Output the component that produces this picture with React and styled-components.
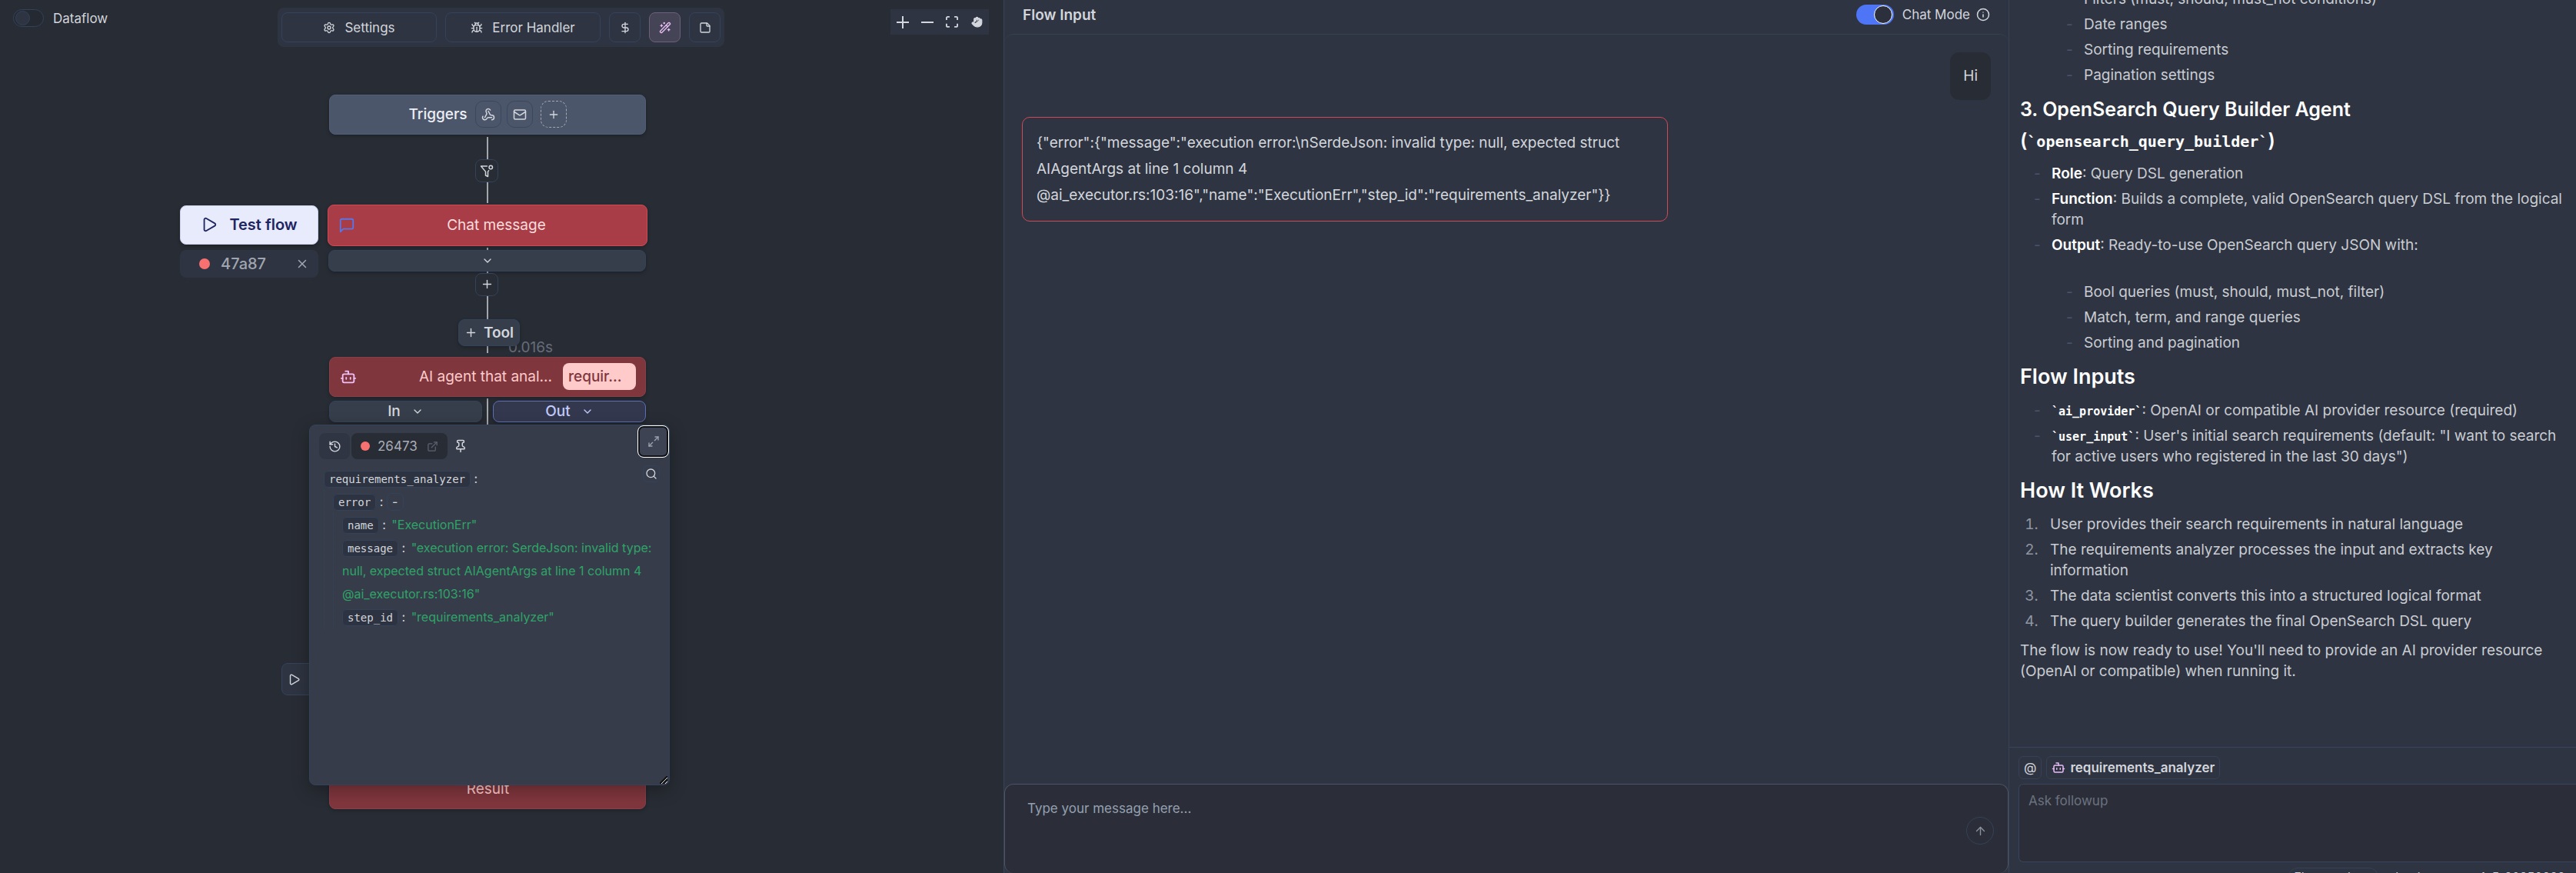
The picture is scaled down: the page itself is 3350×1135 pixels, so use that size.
import React from "react";
import styled, { createGlobalStyle } from "styled-components";
import {
  ArrowUp,
  Bot,
  Bug,
  ChevronDown,
  DollarSign,
  ExternalLink,
  Hand,
  History,
  Info,
  Mail,
  Maximize2,
  Pin,
  Play,
  Plus,
  Search,
  Settings,
  StickyNote,
  WandSparkles,
  Webhook,
  X,
} from "lucide-react";

const GlobalStyle = createGlobalStyle`
  * {
    box-sizing: border-box;
  }

  body {
    margin: 0;
    background: #2e3441;
    color: #d3d6dc;
    font-family: Inter, "Liberation Sans", sans-serif;
    font-size: 17px;
    overflow: hidden;
  }

  button,
  textarea {
    margin: 0;
    padding: 0;
    border: 0;
    background: none;
    color: inherit;
    font: inherit;
  }
`;

const Page = styled.div`
  display: grid;
  grid-template-columns: 1305fr 1308fr 737fr;
  grid-template-rows: minmax(0, 1fr);
  height: 100vh;
`;

/* ---------- flow canvas ---------- */

const Canvas = styled.section`
  position: relative;
  overflow: hidden;
  background: #282c34;
`;

const CanvasBar = styled.header`
  display: grid;
  grid-template-columns: 1fr auto 1fr;
  align-items: start;
  padding: 10px 19px 0 17px;
`;

const SwitchLabel = styled.label`
  display: flex;
  align-items: center;
  gap: 12px;
  height: 27px;
`;

const SmallSwitch = styled.input`
  appearance: none;
  display: flex;
  align-items: center;
  width: 40px;
  height: 23px;
  margin: 0;
  padding: 2px;
  border: 1px solid #33435a;
  border-radius: 12px;
  background: #252932;

  &::before {
    content: "";
    width: 17px;
    height: 17px;
    border: 1px solid #33435a;
    border-radius: 50%;
    background: #2e3441;
  }
`;

const Toolbar = styled.div`
  display: flex;
  gap: 11px;
  padding: 6px 5px;
  border-radius: 8px;
  background: #2e3441;
`;

const ToolButton = styled.button`
  display: flex;
  align-items: center;
  justify-content: center;
  gap: 12px;
  width: ${(props) => (props.$wide ? "202px" : "41px")};
  height: 39px;
  border: 1px solid ${(props) => (props.$active ? "#6d6079" : "#33435a")};
  border-radius: 8px;
  background: ${(props) => (props.$active ? "#444456" : "transparent")};
  color: ${(props) => (props.$active ? "#e9bdf6" : "#d3d6dc")};
`;

const Controls = styled.div`
  display: flex;
  justify-self: end;
  margin-top: 2px;
  background: #2e3441;
`;

const ControlButton = styled.button`
  display: flex;
  align-items: center;
  justify-content: center;
  width: 32px;
  height: 33px;
`;

const Node = styled.div`
  position: absolute;
  left: ${(props) => props.$x}px;
  top: ${(props) => props.$y}px;
  width: ${(props) => props.$w}px;
  height: ${(props) => props.$h}px;
`;

const Edge = styled(Node)`
  background: #a3a6ab;
`;

const Card = styled(Node)`
  display: flex;
  align-items: center;
  justify-content: center;
  padding-bottom: 1px;
  border-radius: 8px;
  box-shadow: 0 2px 5px rgba(0, 0, 0, 0.25);
  font-size: 19px;
`;

const TriggersCard = styled(Card)`
  gap: 7px;
  border: 1px solid #4f5f78;
  background: #4c566a;
  color: #eceff4;
  font-weight: 500;
`;

const TriggerButton = styled.button`
  display: flex;
  align-items: center;
  justify-content: center;
  width: 34px;
  height: 35px;
  margin-left: ${(props) => (props.$spaced ? "3px" : "0")};
  border: 1px ${(props) => (props.$dashed ? "dashed #a3a8b3" : "solid #3b475c")};
  border-radius: 10px;
  color: #d3d6dc;
`;

const StepCard = styled(Card)`
  justify-content: flex-start;
  padding: 0 12px 1px 13px;
  border: 1px solid ${(props) => (props.$selected ? "#d04a55" : "#86404a")};
  background: ${(props) => (props.$selected ? "#a83d47" : "#80363d")};
  color: ${(props) => (props.$selected ? "#fbdcdd" : "#fecaca")};
`;

const StepTitle = styled.span`
  flex: 1;
  padding-right: ${(props) => (props.$tagged ? "14px" : "0")};
  text-align: ${(props) => (props.$tagged ? "right" : "center")};
`;

const StepTag = styled.span`
  width: 95px;
  padding: 0 7px;
  border-radius: 8px;
  background: #fecaca;
  color: #80363d;
  font-weight: 500;
  line-height: 35px;
`;

const SlotButton = styled(Card)`
  gap: 14px;
  border: 1px solid ${(props) => (props.$open ? "#5b70b8" : "#33435a")};
  background: ${(props) => (props.$open ? "#34384f" : "#363e4b")};
  color: ${(props) => (props.$open ? "#c1cbfb" : "#d3d6dc")};
  font-weight: 500;
`;

const EdgeButton = styled(Card)`
  border: 1px solid #33435a;
  background: #282c34;
  box-shadow: none;
`;

const AddTool = styled(Card)`
  gap: 8px;
  border: 1px solid #33435a;
  background: #363e4b;
  font-weight: 600;
`;

const StepTime = styled(Node)`
  color: #666c79;
  font-size: 19px;
  line-height: 20px;
`;

const TestFlow = styled(Card)`
  gap: 15px;
  border: 1px solid #c9d1ea;
  background: #e7ebfc;
  color: #1e2561;
  font-size: 20px;
  font-weight: 600;
`;

const JobChip = styled(Card)`
  justify-content: flex-start;
  gap: 14px;
  padding: 0 12px 0 25px;
  background: #2e3441;
  box-shadow: none;
  color: #a0a5b0;
  font-size: 20px;
  font-weight: 500;

  button {
    display: flex;
    margin-left: auto;
  }
`;

const StatusDot = styled.span`
  width: ${(props) => props.$size}px;
  height: ${(props) => props.$size}px;
  border-radius: 50%;
  background: #f87171;
`;

const PlayTab = styled(Node)`
  display: flex;
  align-items: center;
  padding-left: 7px;
  border: 1px solid #33435a;
  border-radius: 8px 0 0 8px;
  background: #2e3441;
`;

const Popup = styled(Node)`
  border: 1px solid #33435a;
  border-radius: 8px;
  background: #363c4a;
  box-shadow: 0 6px 22px rgba(0, 0, 0, 0.3);
`;

const PopupBar = styled.div`
  display: flex;
  align-items: center;
  gap: 2px;
  height: 54px;
  padding-left: 12px;
`;

const HistoryButton = styled.button`
  display: flex;
  align-items: center;
  justify-content: center;
  width: 40px;
  height: 34px;
  border-radius: 8px;
  background: #2f3543;
`;

const RunLink = styled.a`
  display: flex;
  align-items: center;
  gap: 10px;
  height: 34px;
  padding: 0 12px;
  border-radius: 8px;
  background: #282c34;
  color: #a9adb7;
  text-decoration: none;

  svg {
    margin-left: 2px;
    color: #5d6371;
  }
`;

const PinButton = styled.button`
  display: flex;
  margin-left: 6px;
`;

const ExpandButton = styled.button`
  position: absolute;
  top: 0;
  right: 0;
  display: flex;
  align-items: center;
  justify-content: center;
  width: 41px;
  height: 42px;
  border: 1px solid #fff;
  border-radius: 8px;
  background: #3d4352;
  box-shadow: inset 0 0 0 2px #101218;
  color: #9ca1ad;
`;

const SearchButton = styled.button`
  position: absolute;
  top: 52px;
  right: 12px;
  display: flex;
  align-items: center;
  justify-content: center;
  width: 22px;
  height: 22px;
  border: 1px solid #33435a;
  border-radius: 6px;
`;

const ResizeGrip = styled.svg`
  position: absolute;
  right: 2px;
  bottom: 1px;
`;

const Tree = styled.div`
  padding: 0 12px 0 18px;
  color: #d3d6dc;
  font-size: 16px;
  line-height: 30px;
`;

const Branch = styled.div`
  padding-left: 11px;
  border-left: 1px dotted #33435a;
`;

const Key = styled.span`
  padding: 2px 6px;
  border: 1px solid #33435a;
  border-radius: 6px;
  background: #2d3341;
  font: 14px "DejaVu Sans Mono", monospace;
`;

const Collapse = styled.button`
  width: 22px;
  height: 23px;
  border: 1px solid #33435a;
  border-radius: 6px;
  line-height: 20px;
`;

const StringValue = styled.span`
  margin-left: 3px;
  color: #2fa468;
`;

/* ---------- chat ---------- */

const Chat = styled.section`
  display: flex;
  flex-direction: column;
  border: solid #384358;
  border-width: 0 1px;
  background: #2e3441;
`;

const ChatHeader = styled.header`
  display: flex;
  align-items: center;
  height: 44px;
  padding: 0 24px 6px;
`;

const ChatTitle = styled.h1`
  flex: 1;
  margin: 0;
  font-size: 19px;
  font-weight: 600;
`;

const ModeLabel = styled.label`
  display: flex;
  align-items: center;
  gap: 11px;
  margin-right: 8px;
`;

const ModeSwitch = styled.input`
  appearance: none;
  display: flex;
  align-items: center;
  justify-content: flex-end;
  width: 49px;
  height: 26px;
  margin: 0;
  padding: 2px;
  border-radius: 13px;
  background: #4d75f6;

  &::before {
    content: "";
    width: 22px;
    height: 22px;
    border: 1px solid #fff;
    border-radius: 50%;
    background: #2b303c;
  }
`;

const Messages = styled.div`
  display: flex;
  flex: 1;
  flex-direction: column;
  align-items: flex-start;
  gap: 22px;
  padding: 23px 23px;
  border-top: 1px solid #38414f;
  border-radius: 12px 12px 0 0;
`;

const Bubble = styled.div`
  font-size: 19px;
  line-height: 34px;
`;

const UserBubble = styled(Bubble)`
  align-self: flex-end;
  padding: 14px 17px;
  border-radius: 12px;
  background: #282c34;
`;

const ErrorBubble = styled(Bubble)`
  width: calc(100% * 2 / 3);
  padding: 16px 18px;
  border: 1px solid #d04a55;
  border-radius: 10px;
`;

const Composer = styled.form`
  display: flex;
  height: 116px;
  padding: 20px 18px 0 29px;
  border: 1px solid #4b5365;
  border-bottom: 0;
  border-radius: 12px;
  background: #2b2e38;
`;

const ComposerInput = styled.textarea`
  flex: 1;
  line-height: 22px;
  outline: 0;
  resize: none;

  &::placeholder {
    color: #94a0b0;
  }
`;

const SendButton = styled.button`
  display: flex;
  align-items: center;
  justify-content: center;
  width: 36px;
  height: 36px;
  margin-top: 22px;
  border: 1px solid #33435a;
  border-radius: 50%;
  color: #8b909b;
`;

/* ---------- assistant ---------- */

const Assistant = styled.aside`
  display: flex;
  flex-direction: column;
  min-width: 0;
  background: #2e3441;
`;

const Answer = styled.div`
  display: flex;
  flex: 1;
  flex-direction: column;
  justify-content: flex-end;
  min-height: 0;
  padding: 0 0 85px 14px;
  overflow: hidden;
  color: #c9ccd2;
  font-size: 19px;
  line-height: 27px;

  h2,
  h3 {
    margin: 11px 0 10px;
    color: #fff;
    font-weight: 600;
    line-height: 40px;
  }

  h2 {
    font-size: 27px;
  }

  h3 {
    font-size: 25px;
  }

  p {
    margin: 11px 0 0;
  }

  strong {
    color: #fff;
    font-weight: 600;
  }

  code {
    color: #fff;
    font-family: "DejaVu Sans Mono", monospace;
    font-size: 15px;
    font-weight: 700;
    line-height: 20px;
  }

  h3 code {
    font-size: 20px;
  }
`;

const DashList = styled.ul`
  display: flex;
  flex-direction: column;
  gap: 6px;
  margin: ${(props) => (props.$nested ? "34px 0 0" : "0")};
  padding: 0 0 0 ${(props) => (props.$nested ? "19px" : "18px")};
  list-style: none;

  > li {
    display: grid;
    grid-template-columns: 23px 1fr;
  }

  > li::before {
    content: "-";
    color: #4b5468;
  }
`;

const StepList = styled.ol`
  display: flex;
  flex-direction: column;
  gap: 6px;
  margin: 0;
  padding: 0 6px 0 39px;

  li::marker {
    content: counter(list-item) ".\\00a0\\00a0\\00a0";
    color: #8f96a3;
  }
`;

const Ask = styled.form`
  display: flex;
  flex-direction: column;
  height: 164px;
  padding: 11px 0 0 12px;
  border-top: 1px solid #38455c;
  overflow: hidden;
`;

const ChipRow = styled.div`
  display: flex;
  flex: none;
  gap: 6px;
`;

const ModelRow = styled(ChipRow)`
  justify-content: flex-end;
  margin-top: 7px;
  padding-right: 7px;
  font-size: 16px;
`;

const Chip = styled.button`
  display: flex;
  align-items: center;
  gap: 6px;
  height: ${(props) => (props.$small ? "24px" : "30px")};
  padding: 0 6px;
  border: 1px solid ${(props) => (props.$plain ? "transparent" : "#364157")};
  border-radius: ${(props) => (props.$small ? "12px" : "6px")};
  font-weight: ${(props) => (props.$strong ? 600 : 400)};
`;

const AskInput = styled.textarea`
  flex: none;
  height: 102px;
  margin-top: 6px;
  padding: 10px 12px;
  border: 1px solid #38455c;
  border-right: 0;
  border-radius: 6px 0 0 6px;
  background: #2b2e38;
  line-height: 22px;
  outline: 0;
  resize: none;

  &::placeholder {
    color: #6b7280;
  }
`;

const FilterIcon = () => (
  <svg width="18" height="18" viewBox="0 0 24 24" fill="none" stroke="currentColor" strokeWidth="2" strokeLinecap="round" strokeLinejoin="round">
    <path d="M12.5 4H2l8 9.5V20l4 2v-8.5l1.5-1.8" />
    <circle cx="19" cy="6" r="3" />
  </svg>
);

const ChatIcon = () => (
  <svg width="22" height="22" viewBox="0 0 24 24" fill="none" stroke="#5a75e6" strokeWidth="2" strokeLinecap="round" strokeLinejoin="round">
    <path d="M21 15a2 2 0 0 1-2 2H7l-4 4V5a2 2 0 0 1 2-2h14a2 2 0 0 1 2 2z" />
  </svg>
);

const FitIcon = () => (
  <svg width="16" height="15" viewBox="0 0 32 30" fill="currentColor">
    <path d="M3.692 4.63c0-.53.4-.938.939-.938h5.215V0H4.708C2.13 0 0 2.054 0 4.63v5.216h3.692V4.631zM27.354 0h-5.2v3.692h5.17c.53 0 .984.4.984.939v5.215H32V4.631A4.624 4.624 0 0027.354 0zm.954 24.83c0 .532-.4.94-.939.94h-5.215v3.768h5.215c2.577 0 4.631-2.13 4.631-4.707v-5.139h-3.692v5.139zm-23.677.94c-.531 0-.939-.4-.939-.94v-5.138H0v5.139c0 2.577 2.13 4.707 4.708 4.707h5.138V25.77H4.631z" />
  </svg>
);

const ZoomIcon = ({ plus }) => (
  <svg width="16" height="16" viewBox="0 0 16 16" stroke="currentColor" strokeWidth="2">
    <path d={plus ? "M0 8h16M8 0v16" : "M0 8h16"} />
  </svg>
);

const FlowCanvas = () => (
  <Canvas>
    <CanvasBar>
      <SwitchLabel>
        <SmallSwitch type="checkbox" role="switch" />
        Dataflow
      </SwitchLabel>
      <Toolbar>
        <ToolButton $wide>
          <Settings size={16} /> Settings
        </ToolButton>
        <ToolButton $wide>
          <Bug size={16} /> Error Handler
        </ToolButton>
        <ToolButton aria-label="Environment variables">
          <DollarSign size={16} />
        </ToolButton>
        <ToolButton $active aria-label="AI assistant">
          <WandSparkles size={16} />
        </ToolButton>
        <ToolButton aria-label="Notes">
          <StickyNote size={16} />
        </ToolButton>
      </Toolbar>
      <Controls>
        <ControlButton aria-label="Zoom in">
          <ZoomIcon plus />
        </ControlButton>
        <ControlButton aria-label="Zoom out">
          <ZoomIcon />
        </ControlButton>
        <ControlButton aria-label="Fit view">
          <FitIcon />
        </ControlButton>
        <ControlButton aria-label="Pan">
          <Hand size={15} fill="currentColor" />
        </ControlButton>
      </Controls>
    </CanvasBar>

    <Edge $x={633} $y={178} $w={2} $h={86} />
    <Edge $x={633} $y={322} $w={2} $h={137} />
    <Edge $x={633} $y={518} $w={2} $h={34} />

    <TriggersCard $x={428} $y={123} $w={412} $h={52}>
      Triggers
      <TriggerButton $spaced aria-label="Webhook">
        <Webhook size={18} />
      </TriggerButton>
      <TriggerButton aria-label="Email">
        <Mail size={18} />
      </TriggerButton>
      <TriggerButton $spaced $dashed aria-label="Add trigger">
        <Plus size={16} />
      </TriggerButton>
    </TriggersCard>
    <EdgeButton as="button" aria-label="Filter" $x={618} $y={207} $w={30} $h={30}>
      <FilterIcon />
    </EdgeButton>

    <TestFlow as="button" $x={234} $y={267} $w={180} $h={51}>
      <Play size={22} /> Test flow
    </TestFlow>
    <JobChip $x={234} $y={325} $w={180} $h={36}>
      <StatusDot $size={14} /> 47a87
      <button aria-label="Clear run">
        <X size={18} />
      </button>
    </JobChip>

    <StepCard $selected $x={426} $y={266} $w={416} $h={54}>
      <ChatIcon />
      <StepTitle>Chat message</StepTitle>
    </StepCard>
    <SlotButton as="button" aria-label="Show output" $x={427} $y={325} $w={413} $h={28}>
      <ChevronDown size={16} />
    </SlotButton>
    <EdgeButton as="button" aria-label="Add step" $x={618} $y={355} $w={30} $h={30}>
      <Plus size={17} />
    </EdgeButton>

    <StepTime $x={661} $y={442} $w={60} $h={20}>
      0.016s
    </StepTime>
    <AddTool as="button" $x={596} $y={415} $w={80} $h={35}>
      <Plus size={17} /> Tool
    </AddTool>
    <StepCard $x={428} $y={464} $w={412} $h={52}>
      <Bot size={22} color="#f0c0f8" />
      <StepTitle $tagged>AI agent that anal...</StepTitle>
      <StepTag>requir...</StepTag>
    </StepCard>
    <SlotButton as="button" $x={428} $y={521} $w={199} $h={28}>
      In <ChevronDown size={16} />
    </SlotButton>
    <SlotButton as="button" $open $x={641} $y={521} $w={199} $h={28}>
      Out <ChevronDown size={16} />
    </SlotButton>

    <StepCard $x={428} $y={1000} $w={412} $h={52}>
      <StepTitle>Result</StepTitle>
    </StepCard>
    <PlayTab as="button" aria-label="Test this step" $x={366} $y={862} $w={40} $h={42}>
      <Play size={17} />
    </PlayTab>

    <Popup $x={402} $y={552} $w={469} $h={469}>
      <PopupBar>
        <HistoryButton aria-label="History">
          <History size={17} />
        </HistoryButton>
        <RunLink href="#run">
          <StatusDot $size={12} /> 26473 <ExternalLink size={15} />
        </RunLink>
        <PinButton aria-label="Pin">
          <Pin size={18} />
        </PinButton>
      </PopupBar>
      <ExpandButton aria-label="Expand">
        <Maximize2 size={16} />
      </ExpandButton>
      <SearchButton aria-label="Search">
        <Search size={16} />
      </SearchButton>
      <Tree>
        <Key>requirements_analyzer</Key> :
        <Branch>
          <Key>error</Key> : <Collapse>-</Collapse>
          <Branch>
            <div>
              <Key>name</Key> : <StringValue>"ExecutionErr"</StringValue>
            </div>
            <div>
              <Key>message</Key> :{" "}
              <StringValue>
                "execution error: SerdeJson: invalid type: null, expected struct AIAgentArgs at line 1 column 4
                @ai_executor.rs:103:16"
              </StringValue>
            </div>
            <div>
              <Key>step_id</Key> : <StringValue>"requirements_analyzer"</StringValue>
            </div>
          </Branch>
        </Branch>
      </Tree>
      <ResizeGrip width="10" height="10" viewBox="0 0 10 10" fill="none">
        <path d="M0 10L10 0M4 10l6-6" stroke="#111" strokeWidth="2" />
        <path d="M2 10l8-8M7 10l3-3" stroke="#ddd" strokeWidth="1" />
      </ResizeGrip>
    </Popup>
  </Canvas>
);

const FlowChat = () => (
  <Chat>
    <ChatHeader>
      <ChatTitle>Flow Input</ChatTitle>
      <ModeLabel>
        <ModeSwitch type="checkbox" role="switch" defaultChecked />
        Chat Mode
      </ModeLabel>
      <Info size={18} />
    </ChatHeader>
    <Messages>
      <UserBubble>Hi</UserBubble>
      <ErrorBubble>
        {'{"error":{"message":"execution error:\\nSerdeJson: invalid type: null, expected struct AIAgentArgs at line 1 column 4 '}
        <br />
        {'@ai_executor.rs:103:16","name":"ExecutionErr","step_id":"requirements_analyzer"}}'}
      </ErrorBubble>
    </Messages>
    <Composer>
      <ComposerInput aria-label="Message" placeholder="Type your message here..." />
      <SendButton type="button" aria-label="Send">
        <ArrowUp size={17} />
      </SendButton>
    </Composer>
  </Chat>
);

const AssistantPanel = () => (
  <Assistant>
    <Answer>
      <DashList>
        <li>
          <DashList $nested>
            <li>Filters (must, should, must_not conditions)</li>
            <li>Date ranges</li>
            <li>Sorting requirements</li>
            <li>Pagination settings</li>
          </DashList>
        </li>
      </DashList>
      <h3>
        3. OpenSearch Query Builder Agent
        <br />
        (<code>`opensearch_query_builder`</code>)
      </h3>
      <DashList>
        <li>
          <div>
            <strong>Role</strong>: Query DSL generation
          </div>
        </li>
        <li>
          <div>
            <strong>Function</strong>: Builds a complete, valid OpenSearch query DSL from the logical form
          </div>
        </li>
        <li>
          <div>
            <strong>Output</strong>: Ready-to-use OpenSearch query JSON with:
            <DashList $nested>
              <li>Bool queries (must, should, must_not, filter)</li>
              <li>Match, term, and range queries</li>
              <li>Sorting and pagination</li>
            </DashList>
          </div>
        </li>
      </DashList>
      <h2>Flow Inputs</h2>
      <DashList>
        <li>
          <div>
            <code>`ai_provider`</code>: OpenAI or compatible AI provider resource (required)
          </div>
        </li>
        <li>
          <div>
            <code>`user_input`</code>: User's initial search requirements (default: "I want to search for active users who
            registered in the last 30 days")
          </div>
        </li>
      </DashList>
      <h2>How It Works</h2>
      <StepList>
        <li>User provides their search requirements in natural language</li>
        <li>The requirements analyzer processes the input and extracts key information</li>
        <li>The data scientist converts this into a structured logical format</li>
        <li>The query builder generates the final OpenSearch DSL query</li>
      </StepList>
      <p>The flow is now ready to use! You'll need to provide an AI provider resource (OpenAI or compatible) when running it.</p>
    </Answer>
    <Ask>
      <ChipRow>
        <Chip type="button">@</Chip>
        <Chip type="button" $strong>
          <Bot size={18} color="#e9bdf6" /> requirements_analyzer
        </Chip>
      </ChipRow>
      <AskInput aria-label="Ask followup" placeholder="Ask followup" />
      <ModelRow>
        <Chip type="button" $small>
          Flow mode <ChevronDown size={14} />
        </Chip>
        <Chip type="button" $small $plain>
          claude-sonnet-4-5-20250929
        </Chip>
      </ModelRow>
    </Ask>
  </Assistant>
);

const App = () => (
  <>
    <GlobalStyle />
    <Page>
      <FlowCanvas />
      <FlowChat />
      <AssistantPanel />
    </Page>
  </>
);

export default App;
